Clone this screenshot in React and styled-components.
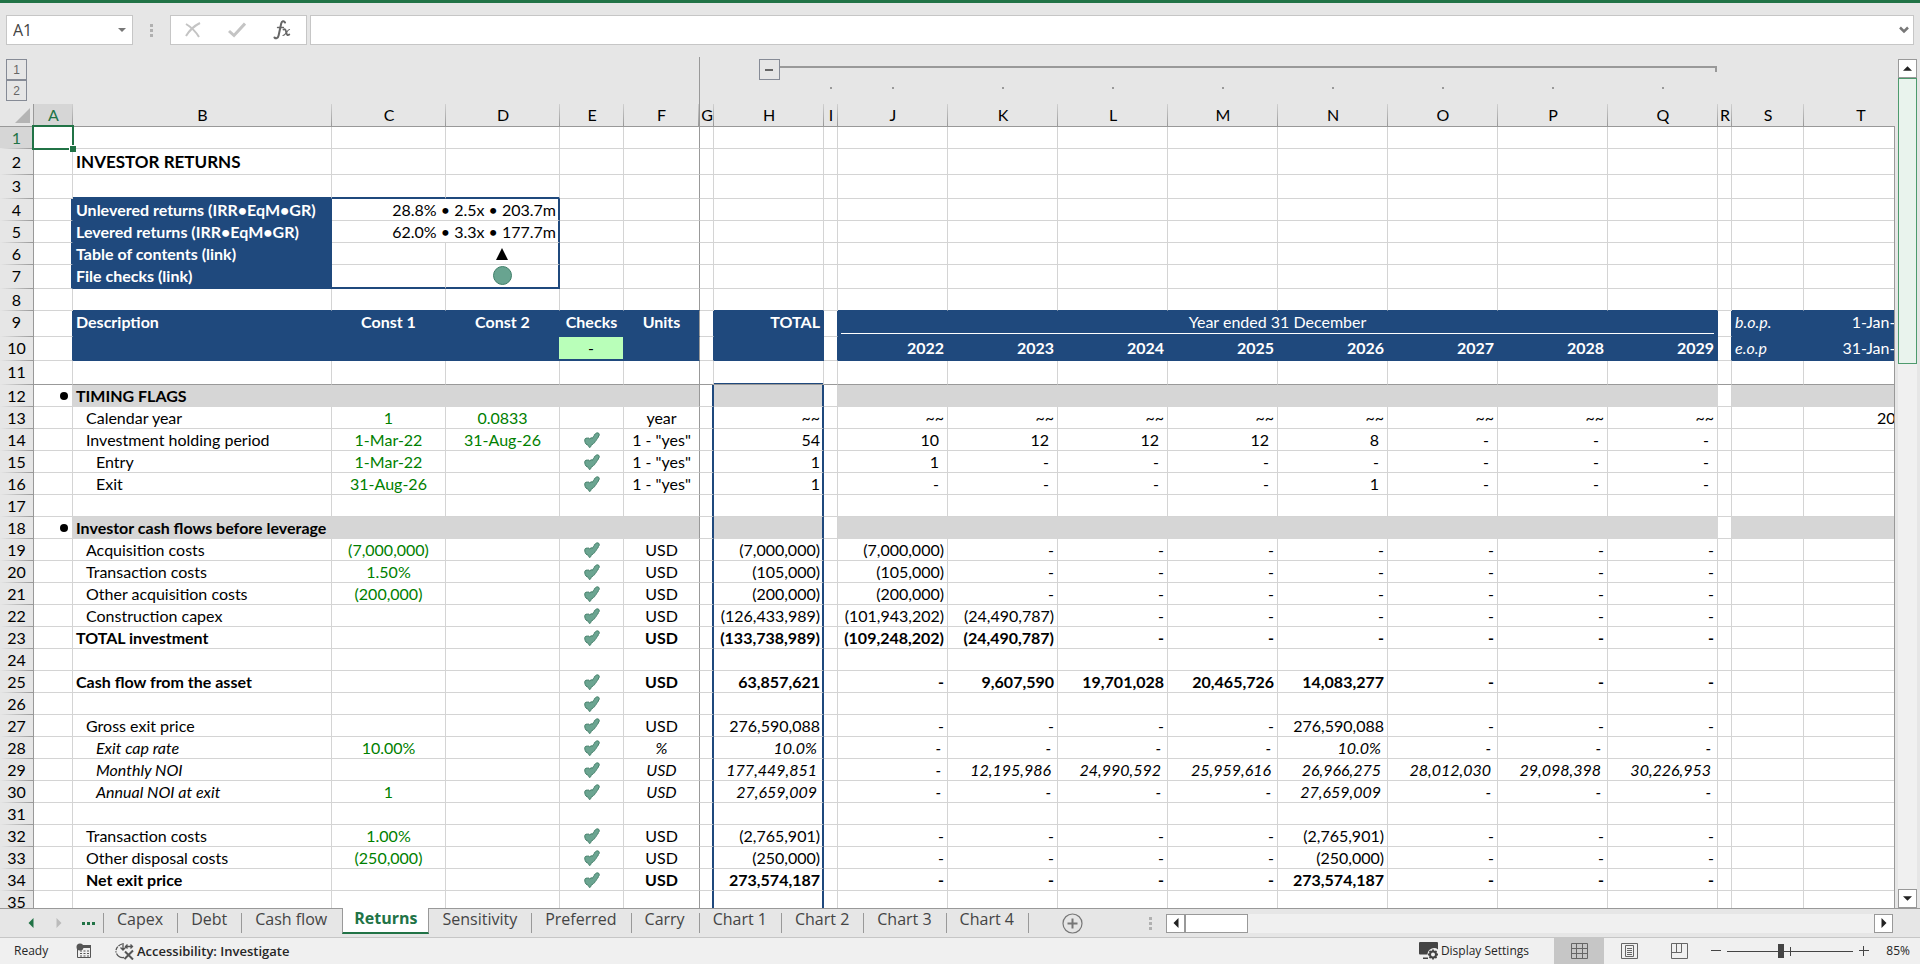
import React, { useState } from 'react';
import styled, { createGlobalStyle, css } from 'styled-components';

const navy = '#1f497d';
const band = '#d6d6d6';
const grid = '#d4d4d4';
const line = '#999999';
const chrome = '#e6e6e6';
const green = '#217346';

const YEARS = ['2022', '2023', '2024', '2025', '2026', '2027', '2028', '2029'];
const YEAR_COLS = ['J', 'K', 'L', 'M', 'N', 'O', 'P', 'Q'];

const COLUMNS = [
    ['A', 39], ['B', 259], ['C', 114], ['D', 114], ['E', 64], ['F', 76], ['G', 14], ['H', 110], ['I', 14],
    ...YEAR_COLS.map((c) => [c, 110]),
    ['R', 14], ['S', 72], ['T', 114],
];

const dashes = (n) => Array(n).fill('-');

const ROWS = [
    { n: 12, section: 'TIMING FLAGS' },
    { n: 13, label: 'Calendar year', indent: 1, c: '1', d: '0.0833', unit: 'year', total: '~~', years: Array(8).fill('~~'), t: '2022' },
    { n: 14, label: 'Investment holding period', indent: 1, c: '1-Mar-22', d: '31-Aug-26', check: true, unit: '1 - "yes"', total: '54', years: ['10', '12', '12', '12', '8', ...dashes(3)], inset: 8 },
    { n: 15, label: 'Entry', indent: 2, c: '1-Mar-22', check: true, unit: '1 - "yes"', total: '1', years: ['1', ...dashes(7)], inset: 8 },
    { n: 16, label: 'Exit', indent: 2, c: '31-Aug-26', check: true, unit: '1 - "yes"', total: '1', years: [...dashes(4), '1', ...dashes(3)], inset: 8 },
    { n: 17 },
    { n: 18, section: 'Investor cash flows before leverage' },
    { n: 19, label: 'Acquisition costs', indent: 1, c: '(7,000,000)', check: true, unit: 'USD', total: '(7,000,000)', years: ['(7,000,000)', ...dashes(7)] },
    { n: 20, label: 'Transaction costs', indent: 1, c: '1.50%', check: true, unit: 'USD', total: '(105,000)', years: ['(105,000)', ...dashes(7)] },
    { n: 21, label: 'Other acquisition costs', indent: 1, c: '(200,000)', check: true, unit: 'USD', total: '(200,000)', years: ['(200,000)', ...dashes(7)] },
    { n: 22, label: 'Construction capex', indent: 1, check: true, unit: 'USD', total: '(126,433,989)', years: ['(101,943,202)', '(24,490,787)', ...dashes(6)] },
    { n: 23, label: 'TOTAL investment', bold: true, check: true, unit: 'USD', total: '(133,738,989)', years: ['(109,248,202)', '(24,490,787)', ...dashes(6)] },
    { n: 24 },
    { n: 25, label: 'Cash flow from the asset', bold: true, check: true, unit: 'USD', total: '63,857,621', years: ['-', '9,607,590', '19,701,028', '20,465,726', '14,083,277', ...dashes(3)] },
    { n: 26, check: true },
    { n: 27, label: 'Gross exit price', indent: 1, check: true, unit: 'USD', total: '276,590,088', years: [...dashes(4), '276,590,088', ...dashes(3)] },
    { n: 28, label: 'Exit cap rate', indent: 2, italic: true, c: '10.00%', check: true, unit: '%', total: '10.0%', years: [...dashes(4), '10.0%', ...dashes(3)], inset: 6 },
    { n: 29, label: 'Monthly NOI', indent: 2, italic: true, check: true, unit: 'USD', total: '177,449,851', years: ['-', '12,195,986', '24,990,592', '25,959,616', '26,966,275', '28,012,030', '29,098,398', '30,226,953'], inset: 6 },
    { n: 30, label: 'Annual NOI at exit', indent: 2, italic: true, c: '1', check: true, unit: 'USD', total: '27,659,009', years: [...dashes(4), '27,659,009', ...dashes(3)], inset: 6 },
    { n: 31 },
    { n: 32, label: 'Transaction costs', indent: 1, c: '1.00%', check: true, unit: 'USD', total: '(2,765,901)', years: [...dashes(4), '(2,765,901)', ...dashes(3)] },
    { n: 33, label: 'Other disposal costs', indent: 1, c: '(250,000)', check: true, unit: 'USD', total: '(250,000)', years: [...dashes(4), '(250,000)', ...dashes(3)] },
    { n: 34, label: 'Net exit price', indent: 1, bold: true, check: true, unit: 'USD', total: '273,574,187', years: [...dashes(4), '273,574,187', ...dashes(3)] },
    { n: 35 },
];

const TABS = ['Capex', 'Debt', 'Cash flow', 'Returns', 'Sensitivity', 'Preferred', 'Carry', 'Chart 1', 'Chart 2', 'Chart 3', 'Chart 4'];

const GlobalStyle = createGlobalStyle`
    *,
    *::before,
    *::after {
        box-sizing: border-box;
    }

    body {
        margin: 0;
        background: #fff;
        font-family: 'Open Sans', 'Noto Sans', sans-serif;
        color: #262626;
    }

    button,
    input {
        font: inherit;
        color: inherit;
        margin: 0;
        padding: 0;
        border: 0;
        background: none;
        outline: none;
    }
`;

const Window = styled.div`
    display: flex;
    flex-direction: column;
    height: 100vh;
    padding-bottom: 2px;
    overflow: hidden;
`;

const TitleEdge = styled.div`
    flex: none;
    height: 3px;
    background: ${green};
`;

const FormulaBar = styled.div`
    flex: none;
    display: flex;
    align-items: center;
    height: 54px;
    padding: 0 6px;
    background: ${chrome};
`;

const Box = styled.div`
    display: flex;
    align-items: center;
    height: 30px;
    border: 1px solid #c6c6c6;
    background: #fff;
`;

const NameBox = styled(Box)`
    width: 127px;
    padding-right: 6px;

    input {
        flex: 1;
        min-width: 0;
        padding-left: 6px;
        font-size: 16px;
        color: #444;
    }

    button {
        display: flex;
    }
`;

const Grip = styled.div`
    width: 3px;
    height: 13px;
    margin: ${(p) => p.$margin || '0 17px'};
    background: repeating-linear-gradient(#b0b0b0 0 3px, transparent 3px 5px);
`;

const FunctionBox = styled(Box)`
    width: 137px;
    margin-right: 3px;
    justify-content: space-around;
    padding: 0 2px 0 0;

    button {
        display: flex;
        align-items: center;
        justify-content: center;
        width: 36px;
        height: 28px;
    }
`;

const FormulaBox = styled(Box)`
    flex: 1;
    padding-right: 4px;

    input {
        flex: 1;
        padding-left: 6px;
        font-size: 16px;
    }

    button {
        display: flex;
    }
`;

const Workspace = styled.div`
    flex: 1;
    min-height: 0;
    display: flex;
    background: ${chrome};
`;

const Pane = styled.div`
    position: relative;
    flex: 1;
    min-width: 0;
    overflow: hidden;

    &::after {
        content: '';
        position: absolute;
        top: 69px;
        right: 0;
        bottom: 0;
        width: 1px;
        background: ${line};
    }
`;

const Sheet = styled.table`
    table-layout: fixed;
    width: 100%;
    min-width: 1918px;
    border-collapse: separate;
    border-spacing: 0;
    font-family: Lato, 'Liberation Sans', sans-serif;
    font-size: 16px;
    line-height: 21px;
    color: #000;
    white-space: nowrap;

    td,
    th {
        padding: 0 3px;
        font-weight: normal;
        vertical-align: top;
    }
`;

const Tr = styled.tr`
    height: ${(p) => p.$h || 22}px;
`;

const OutlineCell = styled.td`
    && {
        padding: 0;
        height: ${(p) => p.$h || 23}px;
        ${(p) => p.$freeze && css`border-right: 1px solid ${line};`}
    }
`;

const LevelButton = styled.button`
    display: flex;
    align-items: center;
    justify-content: center;
    width: 21px;
    height: 21px;
    border: 1px solid #868b96;
    background: ${chrome};
    font-family: 'Liberation Sans', sans-serif;
    font-size: 12px;
    line-height: 14px;
    color: #666;
`;

const Levels = styled.div`
    padding: 2px 0 0 6px;
`;

const Toggle = styled.div`
    display: flex;
    padding-top: 2px;

    &::before,
    &::after {
        content: '';
        flex: 1;
    }

    &::after {
        height: 9px;
        border-bottom: 2px solid ${line};
    }
`;

const Minus = styled.span`
    width: 8px;
    height: 2px;
    background: #666;
`;

const Bracket = styled.div`
    height: 6px;
    margin: 9px 1px 0 0;
    border: solid ${line};
    border-width: 2px 2px 0 0;
`;

const Dot = styled.div`
    width: 2px;
    height: 2px;
    margin: 7px auto 0;
    background: ${line};
`;

const ColumnHead = styled.th`
    height: 23px;
    border-bottom: 1px solid ${line};
    background: linear-gradient(#d0d0d0, ${line}) right / 1px 100% no-repeat, ${(p) => (p.$active ? band : chrome)};
    color: ${(p) => (p.$active ? green : '#000')};

    && {
        padding: 0;
        ${(p) => p.$freeze && css`border-right: 1px solid ${line};`}
    }
`;

const Corner = styled.td`
    border-right: 1px solid ${line};
    border-bottom: 1px solid ${line};

    && {
        vertical-align: middle;
    }

    svg {
        display: block;
        margin-left: auto;
    }
`;

const RowHead = styled.th`
    border-right: 1px solid ${line};
    background: linear-gradient(to right, ${chrome}, ${line}) bottom / 100% 1px no-repeat, ${(p) => (p.$active ? band : chrome)};
    color: ${(p) => (p.$active ? green : '#000')};
    line-height: ${(p) => (p.$tall ? 25 : 21)}px;
    text-align: center;
`;

const Cell = styled.td`
    position: relative;
    border: solid ${(p) => p.$fill || grid};
    border-width: 0 1px 1px 0;
    background: ${(p) => p.$fill || '#fff'};
    color: ${(p) => p.$color || '#000'};
    text-align: ${(p) => p.$align || 'left'};
    ${(p) => p.$right && css`border-right-color: ${p.$right};`}
    ${(p) => p.$bottom && css`border-bottom-color: ${p.$bottom};`}
    ${(p) => p.$rightWide && css`border-right: 2px solid ${navy};`}
    ${(p) => p.$bottomWide && css`border-bottom: 2px solid ${navy};`}
    ${(p) => p.$cap && css`box-shadow: inset 0 -1px ${navy};`}

    && {
        font-weight: ${(p) => (p.$bold ? 700 : 400)};
        font-style: ${(p) => (p.$italic ? 'italic' : 'normal')};
        ${(p) => p.$indent && css`padding-left: ${3 + p.$indent * 10}px;`}
        ${(p) => p.$inset && css`padding-right: ${p.$inset}px;`}
        ${(p) => p.$flush && css`padding: 0; vertical-align: middle;`}
    }
`;

const Title = styled.span`
    font-size: 17px;
    line-height: 25px;
`;

const Bullet = styled.span`
    display: block;
    width: 8px;
    height: 8px;
    margin: 7px 0 0 auto;
    border-radius: 50%;
    background: #000;
`;

const SheetLink = styled.a`
    display: flex;
    align-items: center;
    justify-content: center;
    height: 21px;
    color: #000;
    text-decoration: none;
`;

const StatusLight = styled.span`
    width: 19px;
    height: 19px;
    border: 1px solid #3f7f69;
    border-radius: 50%;
    background: #68a490;
`;

const CheckTotal = styled.div`
    height: 22px;
    margin: 0 0 1px -1px;
    background: #b9ffb9;
    color: #000;
    line-height: 22px;
`;

const YearSpan = styled.div`
    height: 23px;
    margin: 0 3px 2px;
    border-bottom: 1px solid #fff;
    line-height: 21px;
`;

const CheckIcon = styled.svg`
    display: block;
    margin: 0 auto;
`;

const Selection = styled.div`
    position: absolute;
    top: -2px;
    left: -2px;
    right: -2px;
    bottom: -2px;
    border: 2px solid ${green};
    z-index: 1;

    &::after {
        content: '';
        position: absolute;
        right: -4px;
        bottom: -4px;
        width: 7px;
        height: 7px;
        border: solid #fff;
        border-width: 1px 0 0 1px;
        background: ${green};
    }
`;

const VScroll = styled.div`
    flex: none;
    display: flex;
    flex-direction: column;
    width: 25px;
    padding: 2px 3px 0;
`;

const ArrowButton = styled.button`
    flex: none;
    display: flex;
    align-items: center;
    justify-content: center;
    width: 19px;
    height: 19px;
    border: 1px solid ${line};
    background: #fff;
`;

const VTrack = styled.div`
    flex: 1;
    background: #f0f0f0;
`;

const VThumb = styled.div`
    height: 286px;
    border: 1px solid #4d9a6d;
    background: #e9f3ed;
`;

const TabBar = styled.div`
    flex: none;
    display: flex;
    height: 29px;
    border-top: 1px solid ${line};
    background: ${chrome};
`;

const TabNav = styled.div`
    display: flex;
    align-items: center;
    gap: 18px;
    width: 103px;
    padding-left: 26px;

    button {
        display: flex;
    }
`;

const More = styled.button`
    height: 3px;
    width: 13px;
    background: repeating-linear-gradient(to right, ${green} 0 3px, transparent 3px 5px);
`;

const Tab = styled.button`
    height: 20px;
    margin-top: 4px;
    padding: 0 14px 8px 13px;
    border-right: 1px solid ${line};
    font-size: 16px;
    line-height: 12px;
    color: #444;
    white-space: nowrap;

    ${(p) =>
        p.$beforeActive &&
        css`
            border-right-color: transparent;
        `}

    ${(p) =>
        p.$active &&
        css`
            height: 26px;
            margin-top: -1px;
            padding: 0 11px 4px;
            border: 1px solid ${line};
            border-width: 0 1px;
            border-bottom: 2px solid ${green};
            background: #fff;
            color: ${green};
            font-weight: 700;
        `}
`;

const TabList = styled.div`
    display: flex;
    flex: none;

    &::before {
        content: '';
        width: 1px;
        height: 20px;
        margin-top: 4px;
        background: ${line};
    }
`;

const AddSheet = styled.button`
    display: flex;
    align-items: center;
    margin-left: 33px;
`;

const HScroll = styled.div`
    flex: none;
    display: flex;
    align-items: center;
    width: 771px;
    margin-left: auto;
    padding-right: 27px;
`;

const HTrack = styled.div`
    flex: 1;
    height: 19px;
    background: #f0f0f0;
`;

const HThumb = styled.div`
    width: 63px;
    height: 19px;
    border: 1px solid ${line};
    background: #fff;
`;

const StatusBar = styled.footer`
    flex: none;
    display: flex;
    align-items: center;
    height: 27px;
    padding: 0 10px 0 14px;
    border-top: 1px solid #c6c6c6;
    background: #f0f0f0;
    font-size: 12px;
    line-height: 16px;
    white-space: nowrap;
`;

const Ready = styled.span`
    width: 62px;
`;

const StatusButton = styled.button`
    display: flex;
    align-items: center;
    gap: 2px;
    margin-left: ${(p) => p.$gap || 0}px;

    ${(p) =>
        p.$strong &&
        css`
            font-size: 13px;
            font-weight: 600;
        `}
`;

const Spacer = styled.div`
    flex: 1;
`;

const Views = styled.div`
    display: flex;
    margin-left: 25px;
`;

const ViewButton = styled.button`
    display: flex;
    align-items: center;
    justify-content: center;
    width: 50px;
    height: 26px;
    background: ${(p) => (p.$active ? '#c6c6c6' : 'transparent')};
`;

const ZoomControl = styled.div`
    display: flex;
    align-items: center;
    gap: 6px;
    margin-left: 7px;

    button {
        display: flex;
    }
`;

const ZoomSlider = styled.input`
    appearance: none;
    width: 126px;
    height: 14px;
    background: linear-gradient(#444, #444) center / 100% 1px no-repeat, linear-gradient(#444, #444) center / 1px 9px no-repeat;

    &::-webkit-slider-thumb {
        appearance: none;
        width: 6px;
        height: 14px;
        background: #444;
    }
`;

const ZoomValue = styled.output`
    width: 41px;
    text-align: right;
`;

const Triangle = ({ dir = 'down', size = 8, color = '#222' }) => {
    const paths = {
        down: 'M0 2h8L4 6z',
        up: 'M0 6h8L4 2z',
        left: 'M6 0v8L2 4z',
        right: 'M2 0v8l4-4z',
    };
    return (
        <svg width={size} height={size} viewBox="0 0 8 8" aria-hidden="true">
            <path d={paths[dir]} fill={color} />
        </svg>
    );
};

const CheckMark = () => (
    <CheckIcon width="16" height="16" viewBox="0 0 16 16" role="img" aria-label="OK">
        <path
            d="M.8 9C.4 7 1.600 5.700 3.200 6.200c.7-.5 2.200-.2 2.400 1C6.300 5.600 8 5.600 8.600 6.200c.1-1.400 1.100-1.700 1.600-2.600-.1-1.300 1-1.500 1.500-2 .8-1.200 3.600-1 3.600 1 .1 1.300-.9 1.600-1.100 2.400.1 1.300-1.200 1.500-1.400 2.300-.1 1.200-1.400 1.500-1.700 2.400-.1 1.100-1.400 1.300-1.900 2.100-.6 1-1.800.9-2.200 1.600-.2 1-.4 2-1.300 2.100-1.100 0-.9-1.700-1.500-2.300C2.600 13.100 1.100 11.500.8 9z"
            fill="#6ba591"
            stroke="#47806b"
            strokeWidth="1"
        />
    </CheckIcon>
);

const sheetRow = (row, cells) => (
    <Tr key={row.n} $h={row.h}>
        <RowHead scope="row" $active={row.n === 1} $tall={row.n === 2}>{row.n}</RowHead>
        {cells}
    </Tr>
);

// Empty gridded row; `navyBelow` marks the columns that sit on top of a navy block.
const blankRow = (n, h, { navyBelow = '', wide, frozen } = {}) =>
    sheetRow(
        { n, h },
        COLUMNS.map(([col]) => (
            <Cell
                key={col}
                $right={col === 'F' && line}
                $bottom={(frozen && line) || (navyBelow.includes(col) && navy)}
                $bottomWide={wide && navyBelow.includes(col)}
                $cap={frozen && col === 'H'}
                $flush={n === 1}
            >
                {n === 1 && col === 'A' && <Selection />}
            </Cell>
        ))
    );

const plainCells = (from) =>
    COLUMNS.slice(COLUMNS.findIndex(([c]) => c === from)).map(([col]) => (
        <Cell key={col} $right={col === 'F' && line} />
    ));

const summaryRow = (n, label, content, last) =>
    sheetRow({ n, h: last ? 24 : 22 }, [
        <Cell key="A" $rightWide />,
        <Cell key="B" $fill={navy} $color="#fff" $bold>{label}</Cell>,
        ...content,
        ...plainCells('E'),
    ]);

const HeaderRows = () => (
    <>
        {sheetRow({ n: 9, h: 26 }, [
            <Cell key="A" $right={navy} />,
            <Cell key="B" $fill={navy} $color="#fff" $bold>Description</Cell>,
            <Cell key="C" $fill={navy} $color="#fff" $bold $align="center">Const 1</Cell>,
            <Cell key="D" $fill={navy} $color="#fff" $bold $align="center">Const 2</Cell>,
            <Cell key="E" $fill={navy} $color="#fff" $bold $align="center">Checks</Cell>,
            <Cell key="F" $fill={navy} $right={line} $color="#fff" $bold $align="center">Units</Cell>,
            <Cell key="G" $right={navy} />,
            <Cell key="H" $fill={navy} $color="#fff" $bold $align="right">TOTAL</Cell>,
            <Cell key="I" $right={navy} />,
            <Cell key="years" colSpan={8} $fill={navy} $color="#fff" $align="center" $flush>
                <YearSpan>Year ended 31 December</YearSpan>
            </Cell>,
            <Cell key="R" $right={navy} />,
            <Cell key="S" $fill={navy} $color="#fff" $italic>b.o.p.</Cell>,
            <Cell key="T" $fill={navy} $color="#fff" $align="right">1-Jan-22</Cell>,
        ])}
        {sheetRow({ n: 10, h: 24 }, [
            <Cell key="A" $right={navy} />,
            <Cell key="B" $fill={navy} />,
            <Cell key="C" $fill={navy} />,
            <Cell key="D" $fill={navy} />,
            <Cell key="E" $fill={navy} $align="center" $flush>
                <CheckTotal>-</CheckTotal>
            </Cell>,
            <Cell key="F" $fill={navy} $right={line} />,
            <Cell key="G" $right={navy} />,
            <Cell key="H" $fill={navy} />,
            <Cell key="I" $right={navy} />,
            ...YEARS.map((year) => (
                <Cell key={year} $fill={navy} $color="#fff" $bold $align="right">{year}</Cell>
            )),
            <Cell key="R" $right={navy} />,
            <Cell key="S" $fill={navy} $color="#fff" $italic>e.o.p</Cell>,
            <Cell key="T" $fill={navy} $color="#fff" $align="right">31-Jan-22</Cell>,
        ])}
    </>
);

const SectionRow = ({ row }) =>
    sheetRow(row, [
        <Cell key="A" $inset={4}><Bullet /></Cell>,
        <Cell key="B" $fill={band} $bold>{row.section}</Cell>,
        <Cell key="C" $fill={band} />,
        <Cell key="D" $fill={band} />,
        <Cell key="E" $fill={band} />,
        <Cell key="F" $fill={band} $right={line} />,
        <Cell key="G" $rightWide />,
        <Cell key="H" $fill={band} $rightWide />,
        <Cell key="I" />,
        ...YEARS.map((year) => <Cell key={year} $fill={band} />),
        <Cell key="R" />,
        <Cell key="S" $fill={band} />,
        <Cell key="T" $fill={band} />,
    ]);

const DataRow = ({ row }) => {
    const font = { $bold: row.bold, $italic: row.italic };
    const years = row.years || Array(8).fill('');
    return sheetRow(row, [
        <Cell key="A" />,
        <Cell key="B" {...font} $indent={row.indent}>{row.label}</Cell>,
        <Cell key="C" $color="#008000" $align="center">{row.c}</Cell>,
        <Cell key="D" $color="#008000" $align="center">{row.d}</Cell>,
        <Cell key="E" $flush>{row.check && <CheckMark />}</Cell>,
        <Cell key="F" {...font} $align="center" $right={line}>{row.unit}</Cell>,
        <Cell key="G" $rightWide />,
        <Cell key="H" {...font} $align="right" $rightWide $inset={row.italic ? 5 : 2}>{row.total}</Cell>,
        <Cell key="I" />,
        ...years.map((value, i) => (
            <Cell key={YEARS[i]} {...font} $align="right" $inset={row.inset}>{value}</Cell>
        )),
        <Cell key="R" />,
        <Cell key="S" />,
        <Cell key="T" $align="right">{row.t}</Cell>,
    ]);
};

const SheetHead = () => (
    <thead>
        <tr>
            <OutlineCell rowSpan={2} $h={47}>
                <Levels>
                    <LevelButton>1</LevelButton>
                    <LevelButton>2</LevelButton>
                </Levels>
            </OutlineCell>
            <OutlineCell colSpan={5} />
            <OutlineCell $freeze />
            <OutlineCell />
            <OutlineCell>
                <Toggle>
                    <LevelButton aria-label="Collapse columns"><Minus /></LevelButton>
                </Toggle>
            </OutlineCell>
            <OutlineCell colSpan={9}><Bracket /></OutlineCell>
            <OutlineCell colSpan={3} />
        </tr>
        <tr>
            <OutlineCell colSpan={5} $h={24} />
            <OutlineCell $freeze />
            <OutlineCell colSpan={2} />
            <OutlineCell><Dot /></OutlineCell>
            {YEAR_COLS.map((col) => (
                <OutlineCell key={col}><Dot /></OutlineCell>
            ))}
            <OutlineCell colSpan={3} />
        </tr>
        <tr>
            <Corner>
                <svg width="15" height="15" viewBox="0 0 15 15" aria-hidden="true">
                    <path d="M15 0v15H0z" fill="#b4b4b4" />
                </svg>
            </Corner>
            {COLUMNS.map(([col]) => (
                <ColumnHead key={col} scope="col" $active={col === 'A'} $freeze={col === 'F'}>{col}</ColumnHead>
            ))}
        </tr>
    </thead>
);

const App = () => {
    const [activeTab, setActiveTab] = useState('Returns');
    const [zoom, setZoom] = useState(85);

    return (
        <Window>
            <GlobalStyle />
            <TitleEdge />
            <FormulaBar>
                <NameBox>
                    <input aria-label="Name box" defaultValue="A1" />
                    <button aria-label="Named ranges"><Triangle color="#777" /></button>
                </NameBox>
                <Grip />
                <FunctionBox>
                    <button aria-label="Cancel">
                        <svg width="16" height="16" viewBox="0 0 16 16" fill="none" stroke="#c4c4c4" strokeWidth="2">
                            <path d="M1 2c5 3 10 8 13 13M15 1C9 4 4 9 1 14" />
                        </svg>
                    </button>
                    <button aria-label="Enter">
                        <svg width="18" height="16" viewBox="0 0 18 16" fill="none" stroke="#c4c4c4" strokeWidth="3">
                            <path d="M1 9l5 4.500L17 1.500" />
                        </svg>
                    </button>
                    <button aria-label="Insert function">
                        <svg width="18" height="20" viewBox="0 0 18 20" fill="none" stroke="#666" strokeLinecap="round">
                            <path d="M12 2.500C11 .5 8.800.8 8.200 3.500L5.600 15.500C5 18.500 2.800 19 1.500 17.500" strokeWidth="2" />
                            <path d="M4.500 7.500h6" strokeWidth="1.300" />
                            <path d="M10.500 9.500c2-1 2.300 1 2.800 3s1 3.500 3 2" strokeWidth="1.800" />
                            <path d="M16.500 9.500c-2 0-4 6-6.500 6" strokeWidth="1.200" />
                        </svg>
                    </button>
                </FunctionBox>
                <FormulaBox>
                    <input aria-label="Formula" />
                    <button aria-label="Expand formula bar">
                        <svg width="10" height="8" viewBox="0 0 10 8" fill="none" stroke="#777" strokeWidth="2.500">
                            <path d="M1 1.500l4 4 4-4" />
                        </svg>
                    </button>
                </FormulaBox>
            </FormulaBar>

            <Workspace>
                <Pane>
                    <Sheet>
                        <colgroup>
                            <col width="34" />
                            {COLUMNS.map(([col, width]) => (
                                <col key={col} width={col === 'T' ? undefined : width} />
                            ))}
                        </colgroup>
                        <SheetHead />
                        <tbody>
                            {blankRow(1, 22)}
                            {sheetRow({ n: 2, h: 26 }, [
                                <Cell key="A" />,
                                <Cell key="B" $bold><Title>INVESTOR RETURNS</Title></Cell>,
                                ...plainCells('C'),
                            ])}
                            {blankRow(3, 24, { navyBelow: 'BCD', wide: true })}
                            {summaryRow(4, 'Unlevered returns (IRR•EqM•GR)', [
                                <Cell key="CD" colSpan={2} $align="right" $rightWide $inset={2}>28.8% • 2.5x • 203.7m</Cell>,
                            ])}
                            {summaryRow(5, 'Levered returns (IRR•EqM•GR)', [
                                <Cell key="CD" colSpan={2} $align="right" $rightWide $inset={2}>62.0% • 3.3x • 177.7m</Cell>,
                            ])}
                            {summaryRow(6, 'Table of contents (link)', [
                                <Cell key="C" />,
                                <Cell key="D" $rightWide>
                                    <SheetLink href="#contents" aria-label="Table of contents">
                                        <svg width="12" height="12" viewBox="0 0 12 12"><path d="M6 0l6 12H0z" /></svg>
                                    </SheetLink>
                                </Cell>,
                            ])}
                            {summaryRow(7, 'File checks (link)', [
                                <Cell key="C" $bottomWide />,
                                <Cell key="D" $rightWide $bottomWide>
                                    <SheetLink href="#checks" aria-label="File checks"><StatusLight /></SheetLink>
                                </Cell>,
                            ], true)}
                            {blankRow(8, 22, { navyBelow: 'BCDEFHJKLMNOPQST' })}
                            <HeaderRows />
                            {blankRow(11, 24, { frozen: true })}
                            {ROWS.map((row) =>
                                row.section ? <SectionRow key={row.n} row={row} /> : <DataRow key={row.n} row={row} />
                            )}
                        </tbody>
                    </Sheet>
                </Pane>
                <VScroll>
                    <ArrowButton aria-label="Scroll up"><Triangle dir="up" size={9} /></ArrowButton>
                    <VTrack><VThumb /></VTrack>
                    <ArrowButton aria-label="Scroll down"><Triangle size={9} /></ArrowButton>
                </VScroll>
            </Workspace>

            <TabBar>
                <TabNav>
                    <button aria-label="Previous sheets"><Triangle dir="left" size={10} color={green} /></button>
                    <button aria-label="Next sheets"><Triangle dir="right" size={10} color="#bbb" /></button>
                    <More aria-label="More sheets" />
                </TabNav>
                <TabList role="tablist">
                    {TABS.map((tab, i) => (
                        <Tab
                            key={tab}
                            role="tab"
                            aria-selected={tab === activeTab}
                            $active={tab === activeTab}
                            $beforeActive={TABS[i + 1] === activeTab}
                            onClick={() => setActiveTab(tab)}
                        >
                            {tab}
                        </Tab>
                    ))}
                </TabList>
                <AddSheet aria-label="New sheet">
                    <svg width="21" height="21" viewBox="0 0 21 21" fill="none" stroke="#777">
                        <circle cx="10.500" cy="10.500" r="9.500" strokeWidth="1.200" />
                        <path d="M10.500 5.500v10M5.500 10.500h10" strokeWidth="2" />
                    </svg>
                </AddSheet>
                <HScroll>
                    <Grip $margin="0 14px 0 0" />
                    <ArrowButton aria-label="Scroll left"><Triangle dir="left" size={10} /></ArrowButton>
                    <HTrack><HThumb /></HTrack>
                    <ArrowButton aria-label="Scroll right"><Triangle dir="right" size={10} /></ArrowButton>
                </HScroll>
            </TabBar>

            <StatusBar>
                <Ready>Ready</Ready>
                <StatusButton aria-label="Record macro">
                    <svg width="16" height="16" viewBox="0 0 16 16" fill="none" stroke="#555">
                        <path d="M1.500 6v8.500h13v-12H8" />
                        <path d="M7 3.500h8" strokeWidth="3" />
                        <path d="M4 8h9M4 10.500h9M4 13h9" strokeDasharray="2 1.500" />
                        <circle cx="4" cy="4" r="3.500" fill="#555" stroke="none" />
                    </svg>
                </StatusButton>
                <StatusButton $gap={23} $strong>
                    <svg width="20" height="18" viewBox="0 0 20 18" fill="none" stroke="#555" strokeWidth="1.300">
                        <path d="M7 2C2.500 3.500.5 7 1 10.500" strokeDasharray="4 1" />
                        <path d="M1.500 11.500C3 14.500 6 16 9 15.500" />
                        <path d="M8 1v7M5.500 5.500L8 8l2.500-2.500M12.500 2.500l-2 2 2 2M10.500 4.500h7M15.500 2.500l2 2-2 2" />
                        <path d="M10 9.500l8 8M18 8.500L9.500 17" strokeWidth="2" />
                    </svg>
                    Accessibility: Investigate
                </StatusButton>
                <Spacer />
                <StatusButton>
                    <svg width="20" height="18" viewBox="0 0 20 18" fill="#444">
                        <path d="M1 0h17a1 1 0 0 1 1 1v6.500a6.500 6.500 0 0 0-10.500 5H1a1 1 0 0 1-1-1V1a1 1 0 0 1 1-1zM4 15.500h5V17H4z" />
                        <circle cx="14" cy="12.500" r="3" fill="none" stroke="#444" strokeWidth="2" />
                        <path
                            d="M14 7.500v2M14 15.500v2M9 12.500h2M17 12.500h2M10.500 9l1.400 1.400M16.100 14.600l1.400 1.400M17.500 9l-1.400 1.400M11.900 14.600L10.500 16"
                            stroke="#444"
                            strokeWidth="1.800"
                        />
                    </svg>
                    Display Settings
                </StatusButton>
                <Views>
                    <ViewButton $active aria-label="Normal view">
                        <svg width="17" height="16" viewBox="0 0 17 16" fill="none" stroke="#666">
                            <path d="M.5.500h16v15H.5zM5.500.500v15M11.500.500v15M.5 5.500h16M.5 10.500h16" />
                        </svg>
                    </ViewButton>
                    <ViewButton aria-label="Page layout view">
                        <svg width="17" height="16" viewBox="0 0 17 16" fill="none" stroke="#666">
                            <path d="M.5.500h16v15H.5zM4.500 2.500h8v11h-8zM6 5.500h5M6 7.500h5M6 9.500h5M6 11.500h5" />
                        </svg>
                    </ViewButton>
                    <ViewButton aria-label="Page break preview">
                        <svg width="17" height="16" viewBox="0 0 17 16" fill="none" stroke="#666">
                            <path d="M.5.500h16v15H.5zM.5 9.500h10v-9M5.500.500v9" />
                        </svg>
                    </ViewButton>
                </Views>
                <ZoomControl>
                    <button aria-label="Zoom out">
                        <svg width="10" height="10" viewBox="0 0 10 10" stroke="#444"><path d="M0 4.500h10" /></svg>
                    </button>
                    <ZoomSlider
                        type="range"
                        aria-label="Zoom"
                        min="0"
                        max="200"
                        value={zoom}
                        onChange={(e) => setZoom(Number(e.target.value))}
                    />
                    <button aria-label="Zoom in">
                        <svg width="10" height="10" viewBox="0 0 10 10" stroke="#444"><path d="M0 4.500h10M4.500 0v10" /></svg>
                    </button>
                </ZoomControl>
                <ZoomValue>{zoom}%</ZoomValue>
            </StatusBar>
        </Window>
    );
};

export default App;
